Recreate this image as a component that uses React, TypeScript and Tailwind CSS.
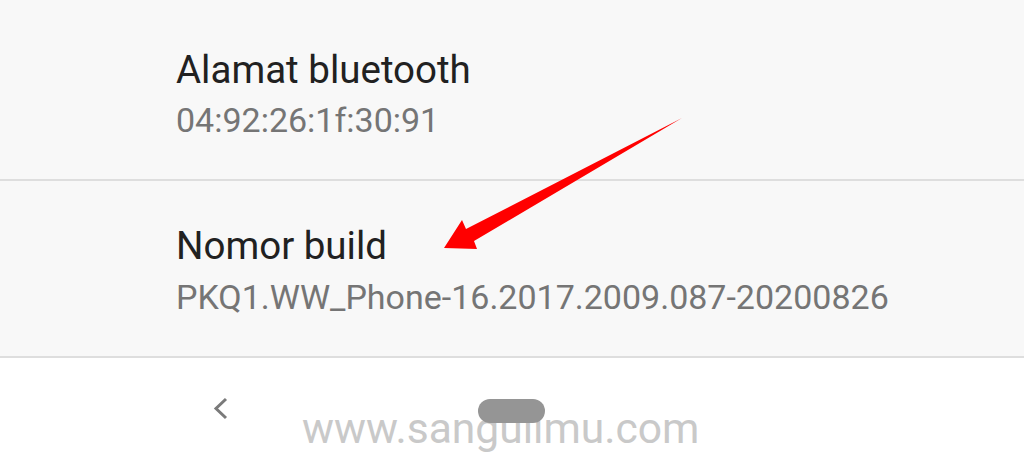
export default function App() {
  return (
    <div className="relative w-[1024px] h-[463px] overflow-hidden bg-white" style={{ fontFamily: "Roboto, 'Liberation Sans', sans-serif" }}>
      {/* settings list */}
      <div className="bg-[#f8f8f8]">
        <div className="h-[179px] pl-[176px] pt-[48px]">
          <div className="text-[38.5px] leading-[44px] text-[#212121]">Alamat bluetooth</div>
          <div className="mt-[8px] text-[34px] leading-[40px] text-[#757575]">04:92:26:1f:30:91</div>
        </div>
        <div className="h-[2px] bg-[#dedede]" />
        <div className="h-[175px] pl-[176px] pt-[43px]">
          <div className="text-[38.5px] leading-[44px] text-[#212121]">Nomor build</div>
          <div className="mt-[9px] text-[34px] leading-[40px] text-[#757575]">PKQ1.WW_Phone-16.2017.2009.087-20200826</div>
        </div>
        <div className="h-[2px] bg-[#dedede]" />
      </div>

      {/* nav bar */}
      <div className="relative h-[105px] bg-white">
        <svg className="absolute left-[212px] top-[38px]" width="18" height="26" viewBox="0 0 18 26">
          <path d="M14 3 L4 12.5 L14 22" fill="none" stroke="#7a7a7a" strokeWidth="3" />
        </svg>
        <div className="absolute left-[302px] top-[49px] text-[42.6px] leading-none whitespace-nowrap text-[#c9c9c9]">www.sangulimu.com</div>
        <div className="absolute left-[478px] top-[41px] h-[24px] w-[67px] rounded-full bg-[#959595]" />
      </div>

      {/* red arrow annotation */}
      <svg className="absolute left-0 top-0 pointer-events-none" width="1024" height="463">
        <polygon points="444,248 462,220 466,229 682,118 474,241 477,249" fill="#ff0000" />
      </svg>
    </div>
  );
}
